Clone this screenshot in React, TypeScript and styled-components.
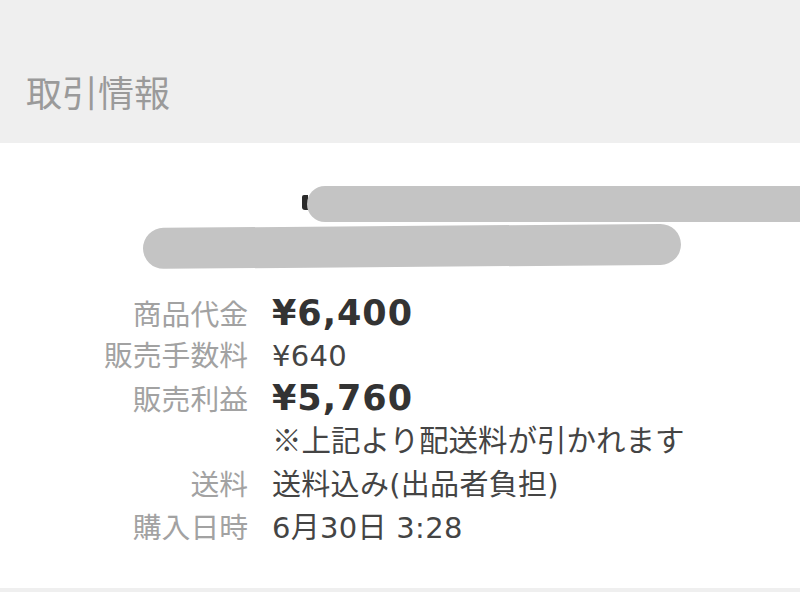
import * as React from 'react'
import styled, { createGlobalStyle } from 'styled-components'

const GlobalStyle = createGlobalStyle`
  html, body {
    margin: 0;
    padding: 0;
    background: #efefef;
  }
  body {
    font-family: "DejaVu Sans", "Noto Sans CJK JP", sans-serif;
  }
`

const Page = styled.div`
  width: 800px;
  height: 592px;
  overflow: hidden;
  background: #efefef;
`

const Header = styled.div`
  height: 143px;
  box-sizing: border-box;
  padding: 70px 0 0 26px;
  font-size: 36px;
  line-height: 42px;
  color: #9a9a9a;
  font-family: "Noto Sans CJK JP", sans-serif;
`

const Section = styled.div`
  background: #fff;
  height: 445px;
  box-sizing: border-box;
  padding-top: 43px;
`

const Redacted = styled.div`
  display: flex;
  flex-direction: column;
  gap: 6px;
`

const RedactRow = styled.div`
  display: flex;
  align-items: center;
  padding-left: 302px;
`

const Fragment = styled.span`
  width: 6px;
  height: 15px;
  margin-top: -4px;
  background: #2a2a2a;
  border-radius: 2px 0 0 3px;
  margin-right: -1px;
`

const Bar = styled.div<{ width?: number; height: number }>`
  background: #c4c4c4;
  height: ${({ height }) => height}px;
  border-radius: ${({ height }) => height / 2}px;
  ${({ width }) => (width ? `width: ${width}px;` : 'flex: 1; border-radius: 18px 0 0 18px;')}
`

const TiltedBar = styled(Bar)`
  margin-left: 143px;
  transform: rotate(-0.45deg);
  transform-origin: left center;
`

const Details = styled.div`
  display: grid;
  grid-template-columns: 248px 1fr;
  column-gap: 24px;
  margin-top: 25px;
  align-items: baseline;
`

const Label = styled.div<{ lh: number }>`
  text-align: right;
  font-family: "Noto Sans CJK JP", sans-serif;
  font-size: 28.8px;
  line-height: ${({ lh }) => lh}px;
  color: #a2a2a2;
  white-space: nowrap;
`

const Value = styled.div<{ bold?: boolean; lh: number }>`
  font-size: ${({ bold }) => (bold ? '35px' : '29px')};
  font-weight: ${({ bold }) => (bold ? 700 : 400)};
  letter-spacing: ${({ bold }) => (bold ? '1px' : '0.3px')};
  color: ${({ bold }) => (bold ? '#333' : '#444')};
  line-height: ${({ lh }) => lh}px;
  white-space: nowrap;
`

const Note = styled.div`
  grid-column: 2;
  font-family: "Noto Sans CJK JP", sans-serif;
  font-size: 29.5px;
  line-height: 40px;
  color: #444;
  margin-bottom: 5px;
`

interface Row {
  label: string
  value: string
  bold?: boolean
  lh: number
}

const rows: Row[] = [
  { label: '商品代金', value: '¥6,400', bold: true, lh: 38 },
  { label: '販売手数料', value: '¥640', lh: 44 },
  { label: '販売利益', value: '¥5,760', bold: true, lh: 39 },
]

const rows2: Row[] = [
  { label: '送料', value: '送料込み(出品者負担)', lh: 39 },
  { label: '購入日時', value: '6月30日 3:28', lh: 41 },
]

const renderRow = (r: Row): React.ReactNode => (
  <React.Fragment key={r.label}>
    <Label lh={r.lh}>{r.label}</Label>
    <Value bold={r.bold} lh={r.lh}>{r.value}</Value>
  </React.Fragment>
)

export default function App(): React.ReactElement {
  return (
    <Page>
      <GlobalStyle />
      <Header>取引情報</Header>
      <Section>
        <Redacted>
          <RedactRow>
            <Fragment />
            <Bar height={36} />
          </RedactRow>
          <TiltedBar width={538} height={41} />
        </Redacted>
        <Details>
          {rows.map(renderRow)}
          <Note>※上記より配送料が引かれます</Note>
          {rows2.map(renderRow)}
        </Details>
      </Section>
    </Page>
  )
}
